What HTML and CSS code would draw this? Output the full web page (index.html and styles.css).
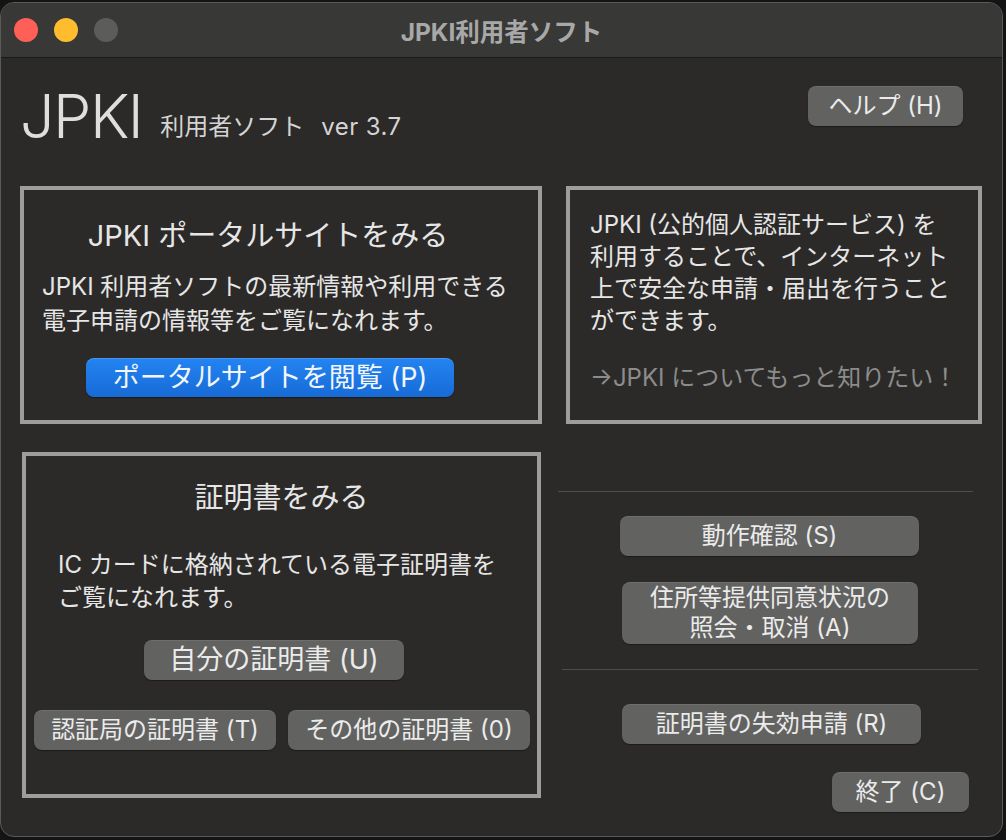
FILE: index.html
```html
<!DOCTYPE html>
<html lang="ja">
<head>
<meta charset="utf-8">
<title>JPKI利用者ソフト</title>
<link rel="stylesheet" href="styles.css">
</head>
<body>
<div class="window">
  <div class="titlebar">
    <div class="lights">
      <span class="light red"></span>
      <span class="light yellow"></span>
      <span class="light gray"></span>
    </div>
    <div class="title">JPKI利用者ソフト</div>
    <div></div>
  </div>
  <div class="content">
    <div class="header">
      <div class="brand"><span class="logo">JPKI</span><span class="sub">利用者ソフト</span><span class="sub ver">ver 3.7</span></div>
      <button class="btn help">ヘルプ (H)</button>
    </div>
    <div class="grid">
      <section class="box portal">
        <h2 class="box-title">JPKI ポータルサイトをみる</h2>
        <p class="desc">JPKI 利用者ソフトの最新情報や利用できる<br>電子申請の情報等をご覧になれます。</p>
        <button class="btn primary">ポータルサイトを閲覧 (P)</button>
      </section>
      <section class="box about">
        <p class="about-text">JPKI (公的個人認証サービス) を<br>利用することで、インターネット<br>上で安全な申請・届出を行うこと<br>ができます。</p>
        <p class="more">→JPKI についてもっと知りたい！</p>
      </section>
      <section class="box certs">
        <h2 class="box-title">証明書をみる</h2>
        <p class="desc">IC カードに格納されている電子証明書を<br>ご覧になれます。</p>
        <button class="btn own">自分の証明書 (U)</button>
        <div class="cert-row">
          <button class="btn half">認証局の証明書 (T)</button>
          <button class="btn half">その他の証明書 (0)</button>
        </div>
      </section>
      <div class="actions">
        <hr class="sep sep1">
        <button class="btn check">動作確認 (S)</button>
        <button class="btn consent"><span class="line">住所等提供同意状況の</span><span class="line">照会・取消 (A)</span></button>
        <hr class="sep sep2">
        <button class="btn revoke">証明書の失効申請 (R)</button>
        <button class="btn quit">終了 (C)</button>
      </div>
    </div>
  </div>
</div>
</body>
</html>
```

FILE: styles.css
```css
* {
  box-sizing: border-box;
  margin: 0;
  padding: 0;
}

html, body {
  background: #141414;
}

body {
  padding-top: 2px;
  font-family: "Inter", "Noto Sans CJK JP", sans-serif;
  color: #e6e6e6;
}

.window {
  width: 1003px;
  height: 835px;
  background: #2b2a28;
  border: 1px solid #5a5a5a;
  border-radius: 14px;
  overflow: hidden;
}

.titlebar {
  height: 55px;
  background: #383836;
  border-bottom: 1px solid #1a1a1a;
  display: grid;
  grid-template-columns: 1fr auto 1fr;
  align-items: center;
}

.lights {
  display: flex;
  gap: 16px;
  padding-left: 13px;
}

.light {
  width: 24px;
  height: 24px;
  border-radius: 50%;
}

.light.red { background: #fe5f57; }
.light.yellow { background: #febc2e; }
.light.gray { background: #5c5c5b; }

.title {
  font-size: 24.5px;
  font-weight: 700;
  color: #a8a8a8;
}

.content {
  padding: 0 20px 0 19px;
}

.header {
  height: 128px;
  display: flex;
  justify-content: space-between;
  align-items: flex-start;
}

.brand {
  margin-top: 27px;
  font-size: 61px;
  line-height: 62px;
  white-space: nowrap;
}

.logo {
  font-weight: 300;
  color: #dedede;
  letter-spacing: -1.5px;
}

.sub {
  font-size: 24px;
  line-height: 24px;
  color: #d4d4d4;
  margin-left: 18px;
  vertical-align: 3px;
}

.sub.ver {
  margin-left: 17px;
  letter-spacing: 0.4px;
}

.btn {
  font-family: inherit;
  font-size: 24px;
  line-height: 30px;
  color: #ebebeb;
  background: #626261;
  border: none;
  border-radius: 8px;
  box-shadow: inset 0 1px 0 rgba(255, 255, 255, 0.08), 0 1px 1px rgba(0, 0, 0, 0.35);
  display: flex;
  align-items: center;
  justify-content: center;
  text-align: center;
  height: 40px;
  white-space: nowrap;
}

.help {
  margin-top: 28px;
  margin-right: 19px;
  width: 155px;
}

.grid {
  display: grid;
  grid-template-columns: 522px 416px;
  grid-template-rows: 238px auto;
  column-gap: 24px;
  row-gap: 28px;
}

.box {
  border: 4px solid #9d9d9d;
}

.box-title {
  font-size: 29px;
  font-weight: 400;
  line-height: 36px;
  text-align: center;
  white-space: nowrap;
}

.desc {
  font-size: 24px;
  line-height: 34px;
  white-space: nowrap;
}

.portal {
  padding: 28px 0 0 18px;
}

.portal .box-title {
  margin-right: 44px;
}

.portal .desc {
  margin-top: 16px;
}

.primary {
  margin: 20px 0 0 44px;
  width: 368px;
  height: 39px;
  font-size: 27px;
  color: #f2f6fc;
  background: linear-gradient(#2384f2, #176bd6);
  box-shadow: inset 0 1px 0 rgba(255, 255, 255, 0.15), 0 1px 1px rgba(0, 0, 0, 0.35);
}

.about {
  padding: 19px 0 0 20px;
}

.about-text {
  font-size: 24px;
  line-height: 32px;
  white-space: nowrap;
}

.more {
  margin-top: 25px;
  font-size: 24px;
  line-height: 32px;
  color: #8c8c8c;
  white-space: nowrap;
}

.certs {
  margin: 0 1px 0 2px;
  height: 346px;
  padding-top: 24px;
}

.certs .desc {
  margin: 32px 0 0 32px;
  line-height: 33px;
}

.own {
  margin: 26px 0 0 118px;
  width: 260px;
  font-size: 27px;
}

.cert-row {
  margin-top: 30px;
  padding-left: 8px;
  display: flex;
  gap: 12px;
}

.half {
  width: 242px;
}

.actions {
  display: flex;
  flex-direction: column;
  align-items: flex-start;
}

.sep {
  border: none;
  height: 1px;
  background: #4e4e4d;
}

.sep1 {
  margin: 39px 0 0 -8px;
  width: 415px;
}

.check {
  margin: 24px 0 0 54px;
  width: 299px;
}

.consent {
  margin: 26px 0 0 56px;
  width: 296px;
  height: 62px;
  flex-direction: column;
}

.consent .line {
  display: block;
  line-height: 30px;
  height: 30px;
}

.sep2 {
  margin: 25px 0 0 -4px;
  width: 416px;
}

.revoke {
  margin: 34px 0 0 56px;
  width: 299px;
}

.quit {
  margin: 28px 0 0 266px;
  width: 137px;
}
```
